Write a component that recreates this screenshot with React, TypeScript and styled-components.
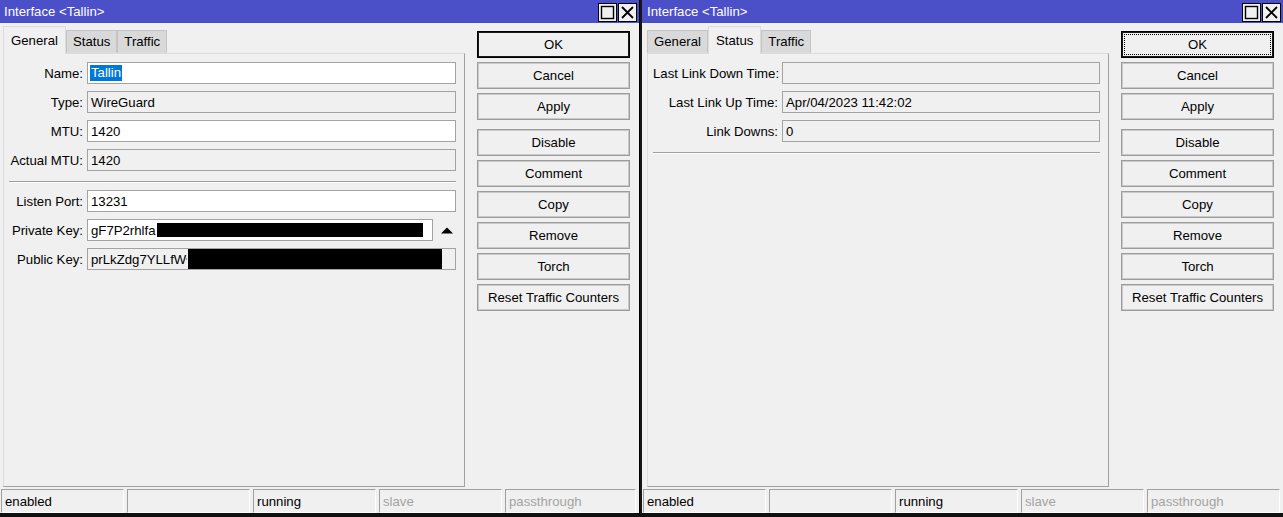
import React from 'react'
import styled, { createGlobalStyle } from 'styled-components'

const GlobalStyle = createGlobalStyle`
  html, body {
    margin: 0;
    padding: 0;
    background: #f0f0f0;
  }
  body {
    font-family: "Liberation Sans", Arial, sans-serif;
    font-size: 13.2px;
    color: #000;
    overflow: hidden;
  }
`

const Desktop = styled.div`
  display: flex;
  width: 1283px;
  height: 517px;
`

const Win = styled.div<{ $width: number; $side: 'left' | 'right' }>`
  box-sizing: border-box;
  width: ${p => p.$width}px;
  height: 517px;
  display: flex;
  flex-direction: column;
  background: #f0f0f0;
  border-bottom: 4px solid #111;
  ${p =>
    p.$side === 'left'
      ? 'border-right: 1px solid #000;'
      : 'border-left: 2px solid #161616;'}
`

const TitleBar = styled.div<{ $pad: number }>`
  height: 23px;
  flex: none;
  display: flex;
  align-items: center;
  justify-content: space-between;
  background: #4c50c8;
  color: #fff;
  padding: 0 2px 0 ${p => p.$pad}px;
`

const TitleText = styled.span`
  white-space: nowrap;
`

const TitleButtons = styled.div`
  display: flex;
  gap: 1px;
  padding-top: 2px;
`

const TitleButton = styled.div`
  box-sizing: border-box;
  width: 19px;
  height: 19px;
  border: 1px solid #000;
  background: #f0f0f0;
  display: flex;
  align-items: center;
  justify-content: center;
`

const Body = styled.div<{ $pad: number }>`
  flex: 1;
  display: flex;
  gap: 12px;
  padding: 0 9px 0 ${p => p.$pad}px;
  min-height: 0;
`

const Main = styled.div`
  flex: 1;
  display: flex;
  flex-direction: column;
`

const TabRow = styled.div`
  height: 30px;
  flex: none;
  display: flex;
  align-items: flex-end;
`

const Tab = styled.div<{ $active?: boolean }>`
  box-sizing: border-box;
  position: relative;
  z-index: ${p => (p.$active ? 1 : 0)};
  height: ${p => (p.$active ? 28 : 23)}px;
  margin-bottom: ${p => (p.$active ? -1 : 0)}px;
  padding: 0 ${p => (p.$active ? 7 : 6)}px;
  display: flex;
  align-items: center;
  background: ${p => (p.$active ? '#f0f0f0' : '#d9d9d9')};
  border: 1px solid ${p => (p.$active ? '#dcdcdc' : '#c4c4c4')};
  border-bottom: ${p => (p.$active ? 'none' : '1px solid #dcdcdc')};
`

const Panel = styled.div`
  flex: 1;
  box-sizing: border-box;
  border: 1px solid;
  border-color: #dcdcdc #a0a0a0 #a0a0a0 #dcdcdc;
  padding: 8px 8px 0 5px;
  display: flex;
  flex-direction: column;
  gap: 7px;
`

const Row = styled.div`
  display: flex;
  align-items: center;
  gap: 4px;
  height: 22px;
`

const Label = styled.div<{ $width: number }>`
  width: ${p => p.$width}px;
  flex: none;
  text-align: right;
  white-space: nowrap;
`

const Field = styled.div<{ $readOnly?: boolean }>`
  flex: 1;
  box-sizing: border-box;
  height: 22px;
  border: 1px solid #a3a3a3;
  background: ${p => (p.$readOnly ? '#f0f0f0' : '#fff')};
  padding: 0 3px;
  display: flex;
  align-items: center;
  white-space: nowrap;
  overflow: hidden;
`

const Selected = styled.span`
  background: #0078d7;
  color: #fff;
  margin-left: -1px;
  padding: 0 1px;
  line-height: 16px;
`

const Redacted = styled.span<{ $width: number; $height: number }>`
  display: inline-block;
  flex: none;
  width: ${p => p.$width}px;
  height: ${p => p.$height}px;
  background: #000;
  margin-left: 1px;
`

const Stub = styled.span`
  display: inline-block;
  width: 1px;
  height: 2px;
  background: #9a9a9a;
`

const Arrow = styled.div`
  width: 19px;
  flex: none;
  display: flex;
  align-items: center;
  justify-content: center;
`

const Separator = styled.div`
  height: 0;
  border-top: 1px solid #a0a0a0;
  border-bottom: 1px solid #fdfdfd;
  margin-top: 3px;
`

const ButtonColumn = styled.div`
  width: 153px;
  flex: none;
  display: flex;
  flex-direction: column;
  gap: 4px;
  padding-top: 8px;
`

const Button = styled.div<{ $default?: boolean; $focus?: boolean; $space?: boolean }>`
  box-sizing: border-box;
  height: 27px;
  margin-top: ${p => (p.$space ? 5 : 0)}px;
  display: flex;
  align-items: center;
  justify-content: center;
  background: #f0f0f0;
  border: 1px solid ${p => (p.$default ? '#000' : '#9c9c9c')};
  box-shadow: inset 0 0 0 1px ${p => (p.$default ? '#1a1a1a' : '#c9c9c9')};
  white-space: nowrap;
  outline: ${p => (p.$focus ? '1px dotted #000' : 'none')};
  outline-offset: -4px;
`

const StatusBar = styled.div`
  height: 24px;
  flex: none;
  margin-top: 2px;
  display: flex;
  gap: 3px;
  padding: 0 3px 0 1px;
`

const Cell = styled.div<{ $dim?: boolean; $fill?: boolean }>`
  box-sizing: border-box;
  width: 123px;
  flex: ${p => (p.$fill ? 1 : 'none')};
  border: 1px solid;
  border-color: #a0a0a0 #fdfdfd #fdfdfd #a0a0a0;
  padding-left: 3px;
  display: flex;
  align-items: center;
  color: ${p => (p.$dim ? '#a3a3a3' : '#000')};
  white-space: nowrap;
  overflow: hidden;
`

const MaxIcon = () => (
  <svg width="17" height="17" viewBox="0 0 17 17">
    <rect x="2.5" y="2.5" width="12" height="12" fill="#f0f0f0" stroke="#000" strokeWidth="1.4" />
  </svg>
)

const CloseIcon = () => (
  <svg width="17" height="17" viewBox="0 0 17 17">
    <path d="M3 3 L14 14 M14 3 L3 14" stroke="#000" strokeWidth="1.8" />
  </svg>
)

const UpArrow = () => (
  <svg width="12" height="7" viewBox="0 0 12 7">
    <polygon points="0,6.5 6,0.5 12,6.5" fill="#000" />
  </svg>
)

const actions = ['Disable', 'Comment', 'Copy', 'Remove', 'Torch', 'Reset Traffic Counters']

const Buttons: React.FC<{ focus?: boolean }> = ({ focus }) => (
  <ButtonColumn>
    <Button $default $focus={focus}>OK</Button>
    <Button>Cancel</Button>
    <Button>Apply</Button>
    {actions.map((a, i) => (
      <Button key={a} $space={i === 0}>
        {a}
      </Button>
    ))}
  </ButtonColumn>
)

const Status = () => (
  <StatusBar>
    <Cell>enabled</Cell>
    <Cell />
    <Cell>running</Cell>
    <Cell $dim>slave</Cell>
    <Cell $dim $fill>
      passthrough
    </Cell>
  </StatusBar>
)

const Title: React.FC<{ pad: number }> = ({ pad }) => (
  <TitleBar $pad={pad}>
    <TitleText>Interface &lt;Tallin&gt;</TitleText>
    <TitleButtons>
      <TitleButton>
        <MaxIcon />
      </TitleButton>
      <TitleButton>
        <CloseIcon />
      </TitleButton>
    </TitleButtons>
  </TitleBar>
)

const tabNames = ['General', 'Status', 'Traffic']

const Tabs: React.FC<{ active: string }> = ({ active }) => (
  <TabRow>
    {tabNames.map(t => (
      <Tab key={t} $active={t === active}>
        {t}
      </Tab>
    ))}
  </TabRow>
)

const GeneralWindow = () => (
  <Win $width={640} $side="left">
    <Title pad={4} />
    <Body $pad={3}>
      <Main>
        <Tabs active="General" />
        <Panel>
          <Row>
            <Label $width={74}>Name:</Label>
            <Field>
              <Selected>Tallin</Selected>
            </Field>
          </Row>
          <Row>
            <Label $width={74}>Type:</Label>
            <Field $readOnly>WireGuard</Field>
          </Row>
          <Row>
            <Label $width={74}>MTU:</Label>
            <Field>1420</Field>
          </Row>
          <Row>
            <Label $width={74}>Actual MTU:</Label>
            <Field $readOnly>1420</Field>
          </Row>
          <Separator />
          <Row>
            <Label $width={74}>Listen Port:</Label>
            <Field>13231</Field>
          </Row>
          <Row>
            <Label $width={74}>Private Key:</Label>
            <Field>
              gF7P2rhlfa
              <Redacted $width={266} $height={14} />
            </Field>
            <Arrow>
              <UpArrow />
            </Arrow>
          </Row>
          <Row>
            <Label $width={74}>Public Key:</Label>
            <Field $readOnly>
              prLkZdg7YLLfW
              <Stub />
              <Redacted $width={254} $height={21} />
            </Field>
          </Row>
        </Panel>
      </Main>
      <Buttons />
    </Body>
    <Status />
  </Win>
)

const statusFields = [
  { label: 'Last Link Down Time:', value: '' },
  { label: 'Last Link Up Time:', value: 'Apr/04/2023 11:42:02' },
  { label: 'Link Downs:', value: '0' },
]

const StatusWindow = () => (
  <Win $width={643} $side="right">
    <Title pad={5} />
    <Body $pad={5}>
      <Main>
        <Tabs active="Status" />
        <Panel>
          {statusFields.map(f => (
            <Row key={f.label}>
              <Label $width={125}>{f.label}</Label>
              <Field $readOnly>{f.value}</Field>
            </Row>
          ))}
          <Separator />
        </Panel>
      </Main>
      <Buttons focus />
    </Body>
    <Status />
  </Win>
)

export default function App() {
  return (
    <>
      <GlobalStyle />
      <Desktop>
        <GeneralWindow />
        <StatusWindow />
      </Desktop>
    </>
  )
}
